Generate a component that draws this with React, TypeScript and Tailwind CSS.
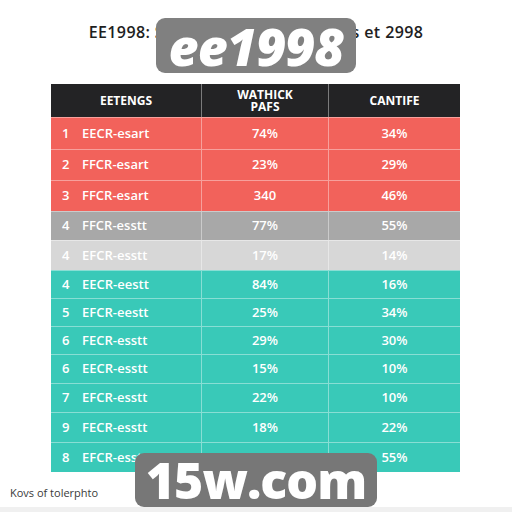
import React from "react";

type Row = { n: string; name: string; a: string; b: string; bg: string; h: string };

const rows: Row[] = [
  { n: "1", name: "EECR-esart", a: "74%", b: "34%", bg: "bg-[#f2625b]", h: "h-[32px]" },
  { n: "2", name: "FFCR-esart", a: "23%", b: "29%", bg: "bg-[#f2625b]", h: "h-[31px]" },
  { n: "3", name: "FFCR-esart", a: "340", b: "46%", bg: "bg-[#f2625b]", h: "h-[31px]" },
  { n: "4", name: "FFCR-esstt", a: "77%", b: "55%", bg: "bg-[#a8a8a8]", h: "h-[29px]" },
  { n: "4", name: "EFCR-esstt", a: "17%", b: "14%", bg: "bg-[#d7d7d7]", h: "h-[30px]" },
  { n: "4", name: "EECR-eestt", a: "84%", b: "16%", bg: "bg-[#39c9b8]", h: "h-[28px]" },
  { n: "5", name: "EFCR-eestt", a: "25%", b: "34%", bg: "bg-[#39c9b8]", h: "h-[28px]" },
  { n: "6", name: "FECR-esstt", a: "29%", b: "30%", bg: "bg-[#39c9b8]", h: "h-[28px]" },
  { n: "6", name: "EECR-esstt", a: "15%", b: "10%", bg: "bg-[#39c9b8]", h: "h-[29px]" },
  { n: "7", name: "EFCR-esstt", a: "22%", b: "10%", bg: "bg-[#39c9b8]", h: "h-[29px]" },
  { n: "9", name: "FECR-esstt", a: "18%", b: "22%", bg: "bg-[#39c9b8]", h: "h-[30px]" },
  { n: "8", name: "EFCR-esstt", a: "57%", b: "55%", bg: "bg-[#39c9b8]", h: "h-[30px]" },
];

export default function App() {
  return (
    <div className="relative w-[512px] h-[512px] bg-white overflow-hidden" style={{ fontFamily: "'Open Sans', 'Liberation Sans', sans-serif" }}>
      <div className="flex flex-col">
        <div className="h-[84px] pt-[21px] flex justify-center">
          <div className="text-[16px] font-semibold text-[#1e1e1e] leading-[22px] whitespace-nowrap tracking-[0.4px]">
            EE1998: Statistiques des résultats et 2998
          </div>
        </div>
        <div className="ml-[51px] w-[409px] flex flex-col text-white">
          <div className="h-[33px] flex bg-[#232325] text-[12px] font-bold uppercase leading-[12px]">
            <div className="w-[151px] flex items-center justify-center border-r border-white/40">EETENGS</div>
            <div className="w-[127px] flex flex-col items-center justify-center border-r border-white/40">
              <span>WATHICK</span>
              <span>PAFS</span>
            </div>
            <div className="flex-1 flex items-center justify-center">CANTIFE</div>
          </div>
          {rows.map((r, i) => (
            <div key={i} className={`flex ${r.bg} ${r.h} border-t border-white/40 text-[13px] font-semibold`}>
              <div className="w-[151px] flex items-center border-r border-white/40 pl-[11px]">
                <span className="w-[20px]">{r.n}</span>
                <span>{r.name}</span>
              </div>
              <div className="w-[127px] flex items-center justify-center border-r border-white/40">{r.a}</div>
              <div className="flex-1 flex items-center justify-center">{r.b}</div>
            </div>
          ))}
        </div>
        <div className="pl-[10px] pt-[13px] text-[11px] text-[#3a3a3a]">Kovs of tolerphto</div>
      </div>
      <div className="absolute left-[156px] top-[18px] w-[200px] h-[55px] rounded-[9px] bg-[#808080] flex items-center justify-center">
        <span className="text-white text-[52px] font-extrabold italic leading-[55px] tracking-[-1px]">ee1998</span>
      </div>
      <div className="absolute left-[135px] top-[453px] w-[242px] h-[54px] rounded-[9px] bg-[#777777] flex items-center justify-center">
        <span className="text-white text-[50px] font-extrabold leading-[54px] tracking-[-1px]">15w.com</span>
      </div>
      <div className="absolute left-0 right-0 bottom-0 h-[5px] bg-[#f0f0f0]" />
    </div>
  );
}
